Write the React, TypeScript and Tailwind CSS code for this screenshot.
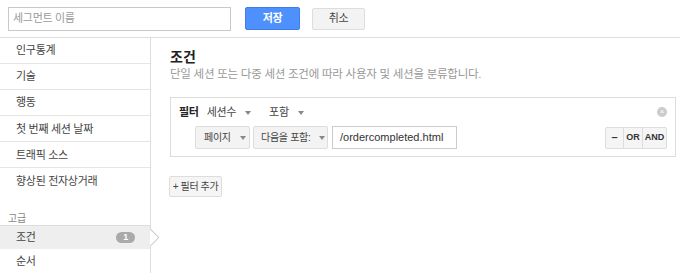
import React from "react";

const font = { fontFamily: '"Liberation Sans", Arial, "Noto Sans CJK KR", sans-serif' };

function Caret() {
  return <span className="inline-block ml-[9px] w-0 h-0 border-l-[3px] border-r-[3px] border-t-[4px] border-l-transparent border-r-transparent border-t-[#888] align-middle" />;
}

const items = ["인구통계", "기술", "행동", "첫 번째 세션 날짜", "트래픽 소스", "향상된 전자상거래"];

export default function App() {
  return (
    <div className="w-[680px] h-[273px] bg-white overflow-hidden text-[11px] tracking-[-0.3px] text-[#333]" style={font}>
      <div className="h-[38px] flex items-center border-b border-[#ddd]">
        <div className="ml-[8px] w-[223px] h-[24px] border border-[#c9c9c9] flex items-center px-[4px] text-[#999]">세그먼트 이름</div>
        <button className="ml-[14px] w-[55px] h-[23px] bg-[#4d90fe] border border-[#3f7fe5] text-white rounded-[2px] text-[11px] font-bold">저장</button>
        <button className="ml-[12px] w-[53px] h-[22px] bg-[#f3f3f3] border border-[#ddd] text-[#444] rounded-[2px] text-[11px]">취소</button>
      </div>
      <div className="flex h-[235px]">
        <div className="w-[151px] border-r border-[#ddd] flex flex-col shrink-0 text-[#444]">
          {items.map((t, i) => (
            <div key={t} className={`h-[27px] flex items-center pl-[16px] ${i < 5 ? "border-b border-[#e5e5e5]" : ""}`}>{t}</div>
          ))}
          <div className="h-[18px]" />
          <div className="h-[13px] pl-[8px] text-[10px] text-[#888] leading-[13px]">고급</div>
          <div className="relative h-[25px] flex items-center pl-[16px] bg-[#eee] border-t border-[#ddd]">
            조건
            <span className="ml-auto mr-[15px] w-[19px] h-[11px] rounded-full bg-[#aaa] text-white text-[9px] font-bold flex items-center justify-center leading-none">1</span>
            <span className="absolute right-[-9px] top-[3px] w-[9px] h-[18px] overflow-hidden">
              <span className="absolute left-[-6.5px] top-[2.6px] w-[12.7px] h-[12.7px] bg-white border-r border-t border-[#ccc] rotate-45" />
            </span>
          </div>
          <div className="h-[25px] flex items-center pl-[16px]">순서</div>
        </div>
        <div className="flex-1 pl-[19px] pr-[4px]">
          <div className="mt-[11px] text-[14px] font-bold text-[#222] leading-[17px] tracking-normal">조건</div>
          <div className="mt-[1px] text-[11.5px] text-[#999] leading-[15px] tracking-[-0.25px]">단일 세션 또는 다중 세션 조건에 따라 사용자 및 세션을 분류합니다.</div>
          <div className="mt-[15px] border border-[#ddd] h-[60px] relative">
            <div className="flex items-center h-[24px] pl-[8px] pt-[4px]">
              <span className="font-bold text-[#222]">필터</span>
              <span className="ml-[8px] text-[#444]">세션수<Caret /></span>
              <span className="ml-[18px] text-[#444]">포함<Caret /></span>
            </div>
            <span className="absolute right-[8px] top-[9px] w-[10px] h-[10px] rounded-full bg-[#ccc] flex items-center justify-center text-white text-[8px] leading-none">×</span>
            <div className="flex items-center mt-[4px] pl-[24px]">
              <div className="w-[55px] h-[23px] bg-[#f3f3f3] border border-[#ddd] rounded-[2px] flex items-center pl-[8px] text-[10px] text-[#444] whitespace-nowrap">페이지<Caret /></div>
              <div className="ml-[3px] w-[75px] h-[23px] bg-[#f3f3f3] border border-[#ddd] rounded-[2px] flex items-center pl-[7px] text-[10px] text-[#444] whitespace-nowrap">다음을 포함:<Caret /></div>
              <div className="ml-[4px] w-[125px] h-[23px] border border-[#ccc] flex items-center pl-[7px] text-[11px] tracking-normal text-[#333] whitespace-nowrap">/ordercompleted.html</div>
              <div className="ml-auto mr-[8px] flex h-[22px] border border-[#ddd] rounded-[2px] bg-[#f5f5f5] text-[9px] font-bold text-[#333] tracking-normal">
                <span className="w-[18px] flex items-center justify-center border-r border-[#ddd] text-[11px]">–</span>
                <span className="w-[19px] flex items-center justify-center border-r border-[#ddd]">OR</span>
                <span className="w-[23px] flex items-center justify-center">AND</span>
              </div>
            </div>
          </div>
          <button className="mt-[19px] ml-[-1px] h-[21px] w-[53px] border border-[#ddd] bg-[#f5f5f5] rounded-[2px] text-[10px] tracking-[-0.4px] text-[#444] whitespace-nowrap">+ 필터 추가</button>
        </div>
      </div>
    </div>
  );
}
